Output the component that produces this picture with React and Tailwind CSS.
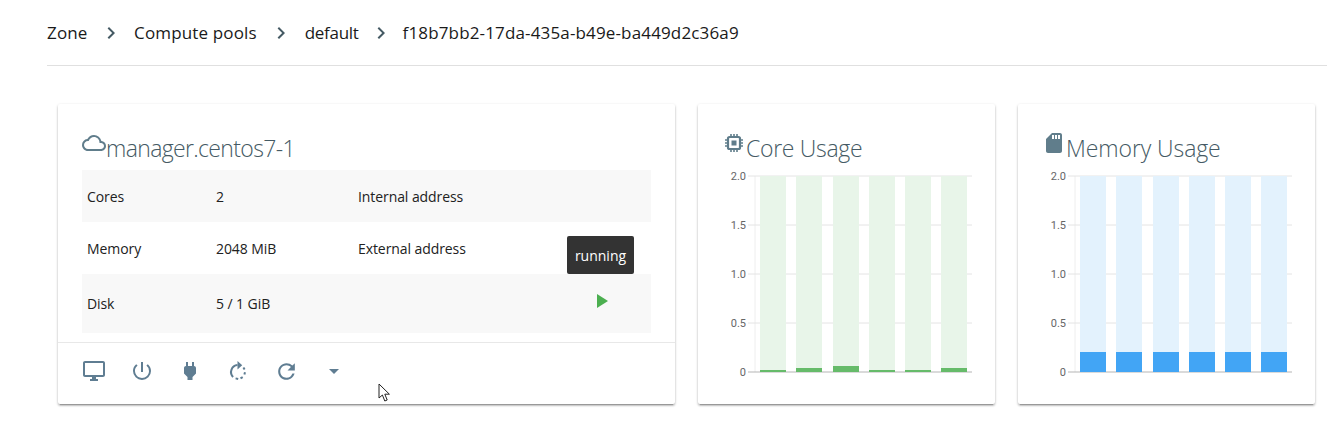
import React from "react";
import {
  MdCloudQueue,
  MdOutlineDesktopWindows,
  MdPowerSettingsNew,
  MdPower,
  MdRefresh,
  MdArrowDropDown,
  MdPlayArrow,
  MdSdCard,
  MdKeyboardArrowRight,
} from "react-icons/md";

const crumbs = [
  { label: "Zone", text: "", arrow: "ml-[11.5px] mr-[11px]" },
  { label: "Compute pools", text: "", arrow: "mx-[12px]" },
  { label: "default", text: "tracking-[-0.3px]", arrow: "mx-[10px]" },
];

const rows = [
  { label: "Cores", value: "2", address: "Internal address", height: "h-[52px]", shaded: true },
  { label: "Memory", value: "2048 MiB", address: "External address", height: "h-[52px]", shaded: false },
  { label: "Disk", value: "5 / 1 GiB", address: "", height: "h-[59px]", shaded: true },
];

const ticks = [
  { label: "2.0", y: 6 },
  { label: "1.5", y: 55 },
  { label: "1.0", y: 104 },
  { label: "0.5", y: 153 },
  { label: "0", y: 202 },
];

const barX = [62, 98, 135, 171, 207, 243];

const cardShadow =
  "shadow-[0_1px_3px_rgba(0,0,0,0.2),0_2px_2px_rgba(0,0,0,0.14),0_3px_1px_-2px_rgba(0,0,0,0.2)]";

const DashedRestart = ({ className }) => (
  <svg viewBox="0 0 24 24" className={className} fill="none" stroke="currentColor" strokeWidth="2">
    <path d="M11.5 6.1A7 7 0 0 0 7.1 18" />
    <path d="M9.6 19.4l2.6.6" />
    <path d="M14.5 19.4l2.2-1.3" />
    <path d="M18.4 15.6l.6-2.4" />
    <path d="M18.6 10.6l-1.2-2" />
    <path d="M11.5 2v8.4L16.2 6.2z" fill="currentColor" stroke="none" />
  </svg>
);

const ChipIcon = ({ className }) => (
  <svg viewBox="0 0 24 24" className={className} fill="none" stroke="currentColor">
    <rect x="6" y="6" width="12" height="12" rx="1.5" strokeWidth="2.2" />
    <rect x="9.5" y="9.5" width="5" height="5" fill="currentColor" stroke="none" />
    <path
      d="M9 3v3M12 3v3M15 3v3M9 18v3M12 18v3M15 18v3M3 9h3M3 12h3M3 15h3M18 9h3M18 12h3M18 15h3"
      strokeWidth="1.6"
    />
  </svg>
);

const CardTitle = ({ icon: Icon, tracking, children }) => (
  <div className="flex h-[66px] items-start pt-7">
    <Icon className="mt-[-1px] h-6 w-6 shrink-0 text-[#607d8b]" />
    <h2 className={`text-[23px] leading-8 font-light text-[#455a64] ${tracking}`}>{children}</h2>
  </div>
);

const UsageChart = ({ values, light, strong }) => (
  <svg width="297" height="218" className="-ml-6 block">
    <line x1="57" y1="6" x2="57" y2="202" stroke="#eeeeee" />
    {ticks.map((tick) => (
      <g key={tick.label}>
        <line x1="50" y1={tick.y} x2="274" y2={tick.y} stroke={tick.y === 202 ? "#b5b5b5" : "#e4e4e4"} />
        <text x="48" y={tick.y + 4} textAnchor="end" fontSize="11" fill="#666666" fontFamily="Roboto, sans-serif">
          {tick.label}
        </text>
      </g>
    ))}
    {barX.map((x, i) => (
      <g key={x}>
        <rect x={x} y="6" width="26" height="196" fill={light} />
        <rect x={x} y={202 - values[i]} width="26" height={values[i]} fill={strong} />
      </g>
    ))}
  </svg>
);

const App = () => {
  return (
    <div className="relative h-[433px] w-[1344px] overflow-hidden bg-white font-['Open_Sans',sans-serif] text-[#212121]">
      <nav className="mr-[17px] ml-[47px] flex h-[66px] items-center border-b border-[#e0e0e0] text-[17px] tracking-[0.15px] text-[#1a1a1a]">
        {crumbs.map((crumb) => (
          <React.Fragment key={crumb.label}>
            <span className={crumb.text}>{crumb.label}</span>
            <MdKeyboardArrowRight className={`h-6 w-6 text-[#455a64] ${crumb.arrow}`} />
          </React.Fragment>
        ))}
        <span>f18b7bb2-17da-435a-b49e-ba449d2c36a9</span>
      </nav>

      <div className="mt-[38px] ml-[58px] flex gap-[23px]">
        <section className={`h-[300px] w-[617px] rounded-[2px] bg-white ${cardShadow}`}>
          <div className="px-6">
            <CardTitle icon={MdCloudQueue} tracking="tracking-[-0.65px]">manager.centos7-1</CardTitle>
            {rows.map((row) => (
              <div
                key={row.label}
                className={`flex items-center pl-[5px] text-[14px] tracking-[-0.08px] ${row.height} ${row.shaded ? "bg-[#f8f8f8]" : ""}`}
              >
                <span className="w-[129px]">{row.label}</span>
                <span className="w-[142px]">{row.value}</span>
                <span>{row.address}</span>
              </div>
            ))}
          </div>
          <div className="mt-[9px] flex h-[61px] items-start border-t border-[#e8e8e8] pt-4 pl-3 text-[#5f7d92]">
            <div className="flex h-6 w-12 justify-center"><MdOutlineDesktopWindows className="h-6 w-6" /></div>
            <div className="flex h-6 w-12 justify-center"><MdPowerSettingsNew className="h-6 w-6" /></div>
            <div className="flex h-6 w-12 justify-center"><MdPower className="h-6 w-6" /></div>
            <div className="flex h-6 w-12 justify-center"><DashedRestart className="h-6 w-6" /></div>
            <div className="flex h-6 w-12 justify-center"><MdRefresh className="h-[25px] w-[25px]" /></div>
            <div className="flex h-6 w-12 justify-center"><MdArrowDropDown className="h-6 w-6" /></div>
          </div>
        </section>

        <section className={`h-[300px] w-[297px] rounded-[2px] bg-white px-6 ${cardShadow}`}>
          <CardTitle icon={ChipIcon} tracking="tracking-[-0.3px]">Core Usage</CardTitle>
          <UsageChart values={[2, 4, 6, 2, 2, 4]} light="#e8f5e9" strong="#66bb6a" />
        </section>

        <section className={`h-[300px] w-[297px] rounded-[2px] bg-white px-6 ${cardShadow}`}>
          <CardTitle icon={MdSdCard} tracking="tracking-[-0.1px]">Memory Usage</CardTitle>
          <UsageChart values={[20, 20, 20, 20, 20, 20]} light="#e3f2fd" strong="#42a5f5" />
        </section>
      </div>

      {/* tooltip over the state cell */}
      <div className="absolute top-[236px] left-[567px] flex h-[38px] w-[67px] items-center justify-center rounded-[2px] bg-[#333333] text-[14px] text-white">
        running
      </div>
      <MdPlayArrow className="absolute top-[289px] left-[589px] h-6 w-6 text-[#4caf50]" />

      {/* mouse pointer caught in the screenshot */}
      <svg width="14" height="20" viewBox="0 0 14 20" className="absolute top-[383px] left-[378px]">
        <path d="M1 1v14l3.4-3 2.4 6 2.4-1-2.4-5.8h4.6z" fill="#ffffff" stroke="#222222" strokeWidth="1" />
      </svg>
    </div>
  );
};

export default App;
